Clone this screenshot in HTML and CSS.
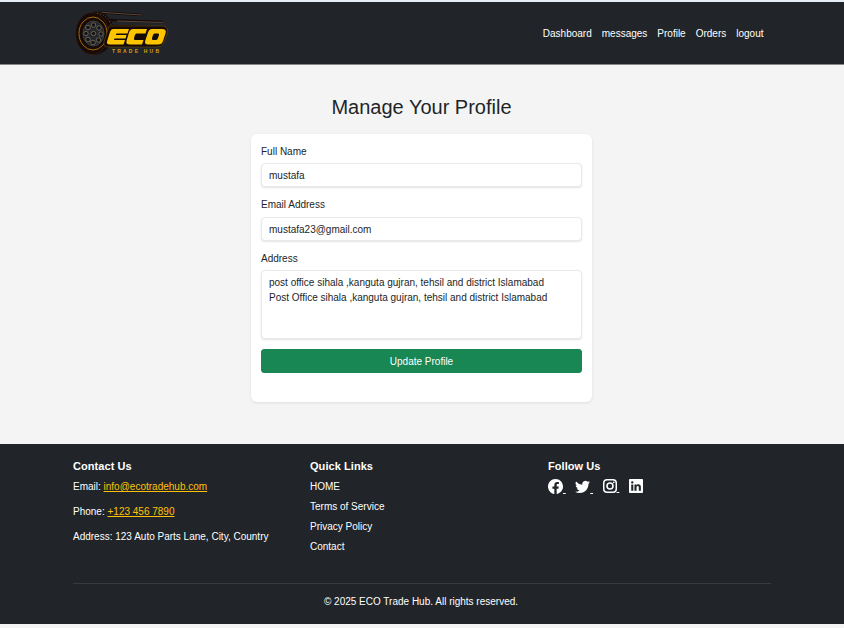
FILE: index.html
```html
<!DOCTYPE html>
<html lang="en">
<head>
<meta charset="utf-8">
<title>Manage Your Profile</title>
<link rel="stylesheet" href="styles.css">
</head>
<body>
<header class="navbar">
  <a class="brand" href="#" aria-label="ECO Trade Hub">
    <svg class="logo" width="100" height="50" viewBox="0 0 100 50">
      <path d="M24 4 68 7M36 12 90 14M40 18 78 19" stroke="#160b08" stroke-width="2.500" fill="none"/>
      <path d="M24 4 68 7M44 13 90 14.500" stroke="#6b5748" stroke-width=".8" fill="none"/>
      <path d="M20 4C32 1 42 14 41 27C39 40 29 47 20 47Z" fill="#160b08"/>
      <ellipse cx="19" cy="25.500" rx="16.500" ry="21" fill="#160b08" stroke="#3d2214" stroke-width=".6"/>
      <path d="M24 5C34 7 38 14 39 21" fill="none" stroke="#76543a" stroke-dasharray="1 2"/>
      <ellipse cx="20" cy="25.500" rx="14" ry="16.500" fill="none" stroke="#a56c08" stroke-width="1"/>
      <ellipse cx="20.500" cy="25.500" rx="10.500" ry="12.500" fill="#242628" stroke="#3f3c39"/>
      <g fill="#151413" stroke="#77726a" stroke-width=".8">
        <circle cx="20.500" cy="17" r="2.300"/><circle cx="26" cy="20" r="2.300"/><circle cx="28" cy="26" r="2.200"/><circle cx="25.500" cy="32" r="2.300"/>
        <circle cx="20" cy="34.500" r="2.300"/><circle cx="15" cy="31.500" r="2.300"/><circle cx="13" cy="25.500" r="2.200"/><circle cx="15" cy="19.500" r="2.300"/>
        <circle cx="20.500" cy="25.500" r="2.200"/>
      </g>
      <path d="M36 18H91Q96 20 94 26L90 36Q88 39 83 39H36Q30 39 31 34Z" fill="#160b08" stroke="#6c4b14" stroke-width=".6"/>
      <path fill="#ffc400" d="M40 21H56L54.500 25.500H43.500L42.800 27H53.500L52.500 30.500H41.500L41 32H52L50.500 36.500H37Q33 36.500 34.200 33L37 24Q38 21 40 21Z"/>
      <path fill="#ffc400" d="M60 21H74L72.500 25.500H63.500Q62.500 25.500 62 27L61 30Q60.500 32 62 32H70.500L69 36.500H57Q52.500 36.500 53.500 33L56 24.500Q57 21 60 21Z"/>
      <path fill="#ffc400" fill-rule="evenodd" d="M79 21H89Q94 21 92.500 25.500L90 33Q89 36.500 85 36.500H75Q71 36.500 72.300 32.500L75 24.500Q76 21 79 21ZM81.500 25.500Q80.500 25.500 80 27L79 30Q78.500 32 80 32H83Q84.500 32 85 30L86 27Q86.500 25.500 85 25.500Z"/>
      <text x="39" y="44.500" textLength="47" class="logo-tagline">TRADE HUB</text>
    </svg>
  </a>
  <nav class="nav-links">
    <a href="#">Dashboard</a><a href="#">messages</a><a href="#">Profile</a><a href="#">Orders</a><a href="#">logout</a>
  </nav>
</header>
<main class="content">
  <h1>Manage Your Profile</h1>
  <form class="card">
    <label for="name">Full Name</label>
    <input id="name" type="text" value="mustafa">
    <label class="email-label" for="email">Email Address</label>
    <input id="email" type="email" value="mustafa23@gmail.com">
    <label for="address">Address</label>
    <textarea id="address">post office sihala ,kanguta gujran, tehsil and district Islamabad
Post Office sihala ,kanguta gujran, tehsil and district Islamabad</textarea>
    <button type="button">Update Profile</button>
  </form>
</main>
<footer class="footer">
  <div class="footer-inner">
    <div class="columns">
      <section>
        <h2>Contact Us</h2>
        <p>Email: <a href="#">info@ecotradehub.com</a></p>
        <p>Phone: <a href="#">+123 456 7890</a></p>
        <p>Address: 123 Auto Parts Lane, City, Country</p>
      </section>
      <section>
        <h2>Quick Links</h2>
        <ul><li>HOME</li><li>Terms of Service</li><li>Privacy Policy</li><li>Contact</li></ul>
      </section>
      <section>
        <h2>Follow Us</h2>
        <div class="social">
          <a href="#" aria-label="Facebook"><svg viewBox="0 0 16 16"><path d="M16 8.049c0-4.446-3.582-8.050-8-8.050C3.580 0-.002 3.603-.002 8.050c0 4.017 2.926 7.347 6.750 7.951v-5.625h-2.030V8.050H6.750V6.275c0-2.017 1.195-3.131 3.022-3.131.876 0 1.791.157 1.791.157v1.980h-1.009c-.993 0-1.303.621-1.303 1.258v1.510h2.218l-.354 2.326H9.250V16c3.824-.604 6.750-3.934 6.750-7.951"/></svg> </a>
          <a href="#" aria-label="Twitter"><svg viewBox="0 0 16 16"><path d="M5.026 15c6.038 0 9.341-5.003 9.341-9.334q.002-.211-.006-.422A6.700 6.700 0 0 0 16 3.542a6.700 6.700 0 0 1-1.889.518 3.300 3.300 0 0 0 1.447-1.817 6.500 6.500 0 0 1-2.087.793A3.286 3.286 0 0 0 7.875 6.030a9.320 9.320 0 0 1-6.767-3.429 3.290 3.290 0 0 0 1.018 4.382A3.300 3.300 0 0 1 .640 6.575v.045a3.290 3.290 0 0 0 2.632 3.218 3.200 3.200 0 0 1-.865.115 3 3 0 0 1-.614-.057 3.280 3.280 0 0 0 3.067 2.277A6.600 6.600 0 0 1 .780 13.580a6 6 0 0 1-.780-.045A9.340 9.340 0 0 0 5.026 15"/></svg> </a>
          <a href="#" aria-label="Instagram"><svg viewBox="0 0 16 16"><path fill-rule="evenodd" d="M4.700 0h6.600A4.700 4.700 0 0 1 16 4.700v6.600a4.700 4.700 0 0 1-4.700 4.700H4.700A4.700 4.700 0 0 1 0 11.300V4.700A4.700 4.700 0 0 1 4.700 0m.100 1.700A3.100 3.100 0 0 0 1.700 4.800v6.400a3.100 3.100 0 0 0 3.100 3.100h6.400a3.100 3.100 0 0 0 3.100-3.100V4.800a3.100 3.100 0 0 0-3.100-3.100zM8 3.700a4.300 4.300 0 1 1 0 8.600 4.300 4.300 0 0 1 0-8.600m0 1.800a2.500 2.500 0 1 0 0 5 2.500 2.500 0 0 0 0-5"/><circle cx="12.270" cy="3.730" r="1"/></svg> </a>
          <a href="#" aria-label="LinkedIn"><svg viewBox="0 0 16 16"><path d="M0 1.146C0 .513.526 0 1.175 0h13.650C15.474 0 16 .513 16 1.146v13.708c0 .633-.526 1.146-1.175 1.146H1.175C.526 16 0 15.487 0 14.854zm4.943 12.248V6.169H2.542v7.225zm-1.200-8.212c.837 0 1.358-.554 1.358-1.248-.015-.709-.520-1.248-1.342-1.248S2.400 3.226 2.400 3.934c0 .694.521 1.248 1.327 1.248zm4.908 8.212V9.359c0-.216.016-.432.080-.586.173-.431.568-.878 1.232-.878.869 0 1.216.662 1.216 1.634v3.865h2.401V9.250c0-2.220-1.184-3.252-2.764-3.252-1.274 0-1.845.700-2.165 1.193v.025h-.016l.016-.025V6.169h-2.400c.030.678 0 7.225 0 7.225z"/></svg></a>
        </div>
      </section>
    </div>
    <p class="copyright">© 2025 ECO Trade Hub. All rights reserved.</p>
  </div>
</footer>
</body>
</html>
```
FILE: styles.css
```css
* { box-sizing: border-box; }
body {
  margin: 0;
  height: 628px;
  border-top: 2px solid #e6edf5;
  background: #f4f4f4;
  color: #212529;
  font: 10px/15px "Liberation Sans", Arial, sans-serif;
}
.navbar {
  display: flex;
  justify-content: space-between;
  align-items: center;
  height: 63px;
  padding: 0 80.500px 0 73px;
  background: #212529;
  border-bottom: 1px solid #85888a;
}
.brand, .logo { display: block; }
.logo-tagline { fill: #d6a20b; font: bold 5px "Liberation Sans", Arial, sans-serif; }
.nav-links { display: flex; gap: 10px; }
.nav-links a { color: #fff; text-decoration: none; }
.content {
  display: flex;
  flex-direction: column;
  align-items: center;
  height: 379px;
  padding: 30px 1px 0 0;
}
h1 {
  margin: 0 0 15px;
  font-size: 20px;
  font-weight: 400;
  line-height: 24px;
}
.card {
  display: flex;
  flex-direction: column;
  width: 341px;
  height: 268px;
  padding: 10px;
  border-radius: 6px;
  background: #fff;
  box-shadow: 0 1px 3px rgba(0, 0, 0, .09);
}
label { height: 15px; margin-bottom: 4px; }
.email-label { margin-bottom: 5px; }
input, textarea {
  display: block;
  width: 100%;
  margin: 0 0 10px;
  padding: 4px 7px;
  border: 1px solid #e7e9eb;
  border-radius: 4px;
  background: #fff;
  color: #212529;
  font: inherit;
  box-shadow: 0 1px 2px rgba(0, 0, 0, .11);
}
input { height: 24px; }
textarea { height: 69px; resize: none; overflow: hidden; }
button {
  height: 24px;
  padding: 0;
  border: 1px solid #198754;
  border-radius: 3px;
  background: #198754;
  color: #fff;
  font: inherit;
}
.footer { height: 180px; background: #212529; color: #fff; }
.footer-inner { width: 698px; margin: 0 auto; padding-top: 15px; }
.columns {
  display: grid;
  grid-template-columns: 237px 238px 1fr;
  height: 125px;
  border-bottom: 1px solid #373b3e;
}
h2 { margin: 0 0 5px; font-size: 11px; line-height: 15px; letter-spacing: .06px; }
p { margin: 0 0 10px; }
p a { color: #ffc107; }
ul { margin: 0; padding: 0; list-style: none; }
li { margin-bottom: 5px; }
.social { display: flex; gap: 9.500px; }
.social a { color: #fff; white-space: pre; }
.social svg { width: 15px; height: 15px; vertical-align: -2px; fill: currentColor; }
.social a:nth-child(3) svg, .social a:nth-child(4) svg { width: 14px; height: 14px; vertical-align: -2px; }
.copyright { margin: 10px 2px 0 0; text-align: center; }
```
